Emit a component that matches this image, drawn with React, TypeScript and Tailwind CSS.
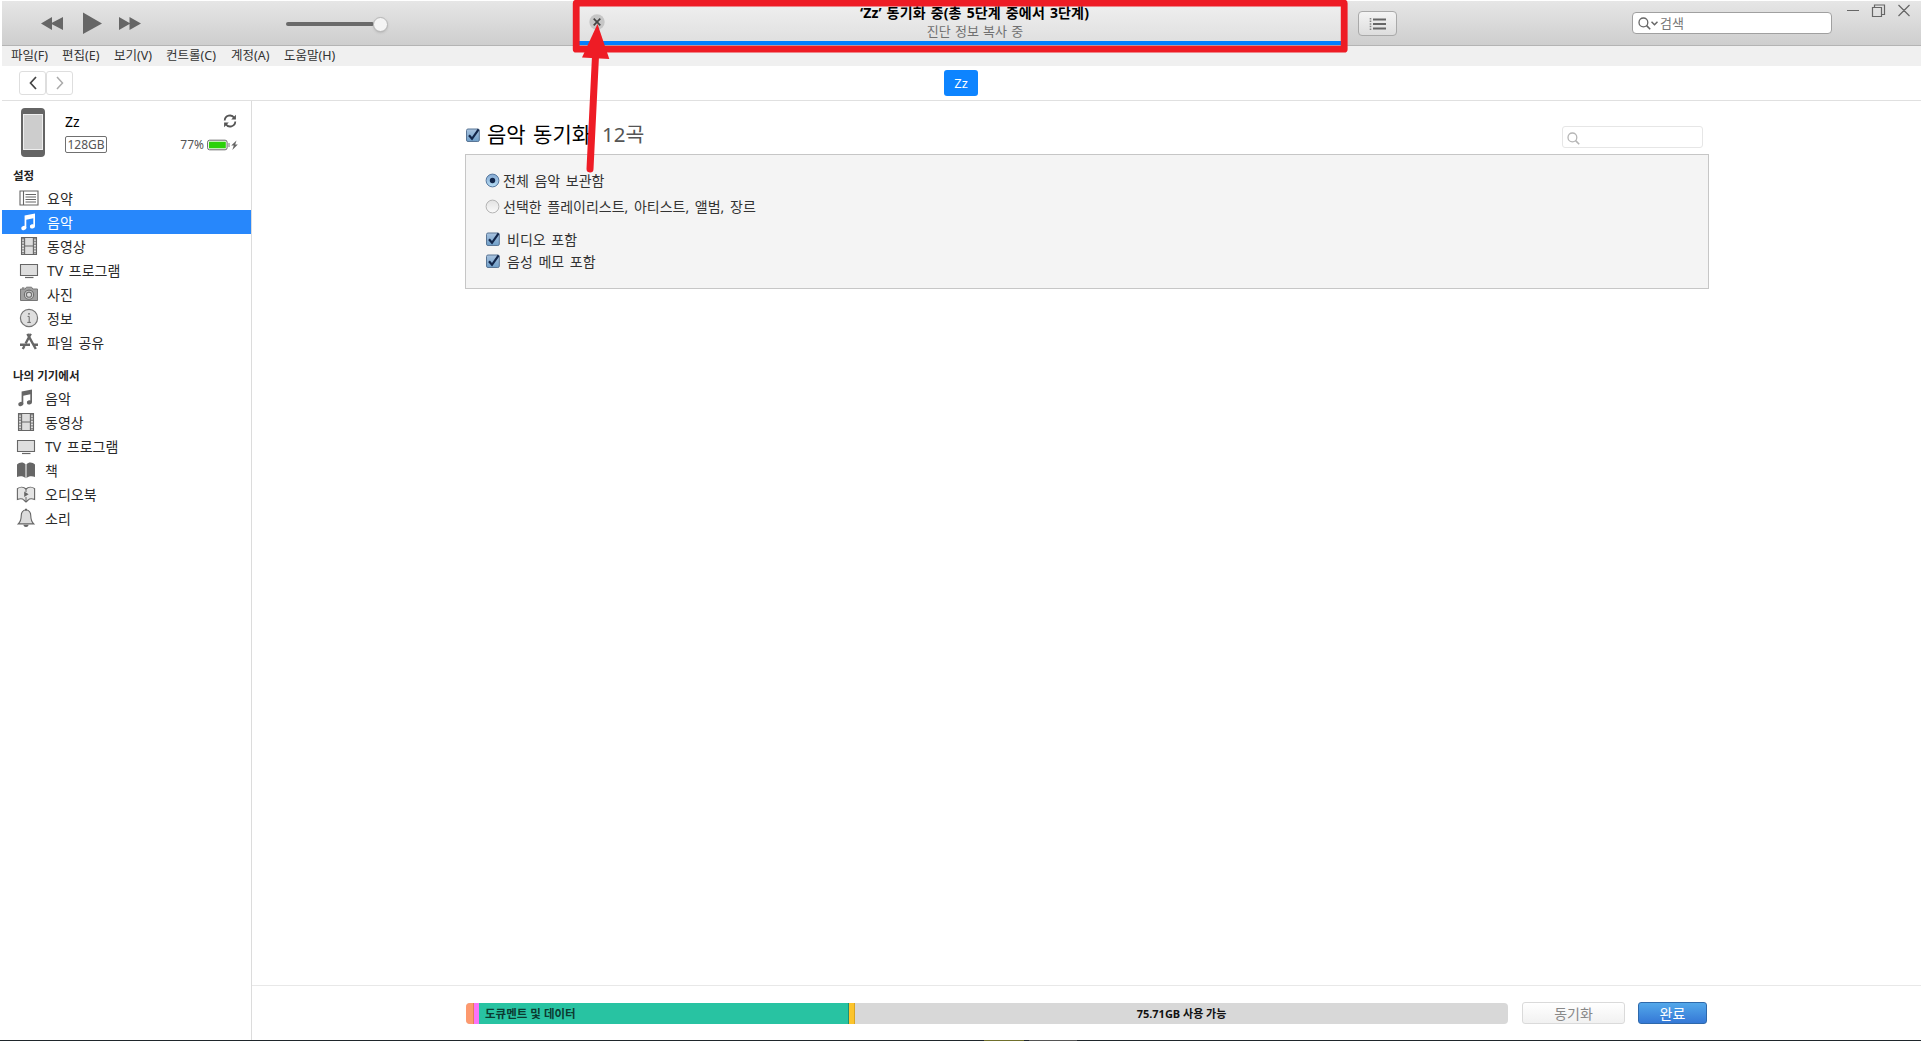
import React from "react";

type IconName = "summary" | "music" | "film" | "tv" | "camera" | "info" | "apps" | "book" | "audiobook" | "bell";

function Icon({ name, light }: { name: IconName; light?: boolean }) {
  const c = light ? "#ffffff" : "#666666";
  const common = { width: 20, height: 20, viewBox: "0 0 20 20", fill: "none", stroke: c, strokeWidth: 1.1 };
  switch (name) {
    case "summary":
      return (
        <svg {...common}>
          <path d="M1 3h18v14H1zM4.500 3v14" />
          <path d="M6.500 6.500H17M6.500 9H17M6.500 11.500H17M6.500 14H17" strokeWidth="1.100" />
        </svg>
      );
    case "music":
      return (
        <svg {...common} stroke="none" fill={c}>
          <path d="M5.600 3.600 16 1.600v12.800h-1.700V6.200L7.300 7.700v8.600H5.600z" />
          <ellipse cx="4.800" cy="16" rx="2.600" ry="2.100" transform="rotate(-15 4.800 16)" />
          <ellipse cx="13.400" cy="14.400" rx="2.600" ry="2.100" transform="rotate(-15 13.400 14.400)" />
        </svg>
      );
    case "film":
      return (
        <svg {...common}>
          <path d="M2.500 1.500h15v17h-15z" fill="#dedede" />
          <path d="M5.600 1.500v17M14.400 1.500v17M5.600 10h8.800" />
          <path d="M4 2v16M16 2v16" strokeWidth="1.400" strokeDasharray="1.400 1.400" />
        </svg>
      );
    case "tv":
      return (
        <svg {...common}>
          <path d="M1.500 4.500h17v11h-17z" fill="#dedede" />
          <path d="M6 17.500h8.500" strokeWidth="1.200" />
        </svg>
      );
    case "camera":
      return (
        <svg {...common}>
          <path d="M1.500 5h4.700l1.200-1.800h5.200L13.800 5h4.700v11.500h-17z" fill="#a2a2a2" stroke="#777" strokeWidth="1" />
          <circle cx="10" cy="10.700" r="4.600" fill="#d4d4d4" stroke="#707070" />
          <circle cx="10" cy="10.700" r="2.600" fill="#dcdcdc" stroke="#707070" />
          <path d="M3 4h2.400" />
        </svg>
      );
    case "info":
      return (
        <svg {...common}>
          <circle cx="10" cy="10" r="8.600" fill="#dfdfdf" stroke="#757575" strokeWidth="1.200" />
          <path d="M8.600 8.400h1.600v6M8.300 14.400h3.600" strokeWidth="1" />
          <circle cx="10" cy="5.800" r=".9" fill={c} stroke="none" />
        </svg>
      );
    case "apps":
      return (
        <svg {...common} strokeWidth="2.400">
          <path d="M8.400 1.800 16.800 17M11.800 1.800 6.600 11.500M5.400 14 3.800 17" />
          <path d="M1 12.700h10M14.400 12.700H19" />
        </svg>
      );
    case "book":
      return (
        <svg {...common} fill={c} stroke="none">
          <path d="M1 4.600C3 2.400 7 1.600 9.500 4.200v14C7.600 15.900 3.600 15.800 1 17zM10.500 4.200C13 1.600 17 2.400 19 4.600V17c-2.600-1.200-6.600-1.100-8.500 1.200z" />
        </svg>
      );
    case "audiobook":
      return (
        <svg {...common}>
          <path d="M1.400 4.600C4 2.600 7.600 2.800 10 5c2.400-2.200 6-2.400 8.600-.4v10.800c-2.600-.8-5.200-.8-6.400.6L10 18l-2.200-2c-1.200-1.400-3.800-1.400-6.400-.6z" fill="#e4e4e4" />
          <path d="M10 5v3M10 13v5" strokeWidth="1" />
          <path d="M8.200 7.600l4.400 2.700-4.400 2.700z" fill={c} stroke="none" />
        </svg>
      );
    case "bell":
      return (
        <svg {...common}>
          <path d="M10 1.800c-3.600.6-4.800 3-4.800 6.200 0 4-.8 5.800-3 7.900h15.600c-2.200-2.100-3-3.900-3-7.900 0-3.200-1.200-5.600-4.800-6.200z" fill="#dcdcdc" />
          <path d="M8 17.200c.4 1.600 3.600 1.600 4 0z" fill={c} />
          <path d="M9 1.600h2" strokeWidth="1.600" />
        </svg>
      );
  }
}

function Row({ icon, label, active, indent }: { icon: IconName; label: string; active?: boolean; indent?: boolean }) {
  return (
    <div
      className={
        "flex h-6 items-center text-[14px] " +
        (indent ? "gap-2 pl-[17px] " : "gap-[9px] pl-[14px] ") +
        (active ? "bg-[#2787fb] text-white" : "text-[#2a2a2a]")
      }
    >
      <Icon name={icon} light={active} />
      <span className="whitespace-pre [word-spacing:2px]">{label}</span>
    </div>
  );
}

function Check() {
  return (
    <svg width="16" height="16" viewBox="0 0 16 16" className="shrink-0">
      <defs>
        <linearGradient id="ck" x1="0" y1="0" x2="0" y2="1">
          <stop offset="0" stopColor="#a9c3df" />
          <stop offset="1" stopColor="#6f9fc9" />
        </linearGradient>
      </defs>
      <rect x="1.500" y="2" width="12.800" height="12.500" rx="1.500" fill="url(#ck)" stroke="#5a7696" />
      <path d="M4 8.200 7 11.800 13.600 2.400" fill="none" stroke="#12264a" strokeWidth="2.200" />
    </svg>
  );
}

function Radio({ on }: { on?: boolean }) {
  return (
    <svg width="15" height="15" viewBox="0 0 15 15" className="shrink-0">
      <defs>
        <linearGradient id="rOn" x1="0" y1="0" x2="0" y2="1">
          <stop offset="0" stopColor="#85a9d2" />
          <stop offset="1" stopColor="#b5dcf3" />
        </linearGradient>
        <linearGradient id="rOff" x1="0" y1="0" x2="0" y2="1">
          <stop offset="0" stopColor="#e2e2e2" />
          <stop offset="1" stopColor="#fafafa" />
        </linearGradient>
      </defs>
      <circle cx="7.500" cy="7.500" r="6.400" fill={on ? "url(#rOn)" : "url(#rOff)"} stroke={on ? "#55779f" : "#b4b4b4"} />
      {on && <circle cx="7.500" cy="7.500" r="2.700" fill="#12264a" />}
    </svg>
  );
}

function Magnifier({ color }: { color: string }) {
  return (
    <svg width="13" height="13" viewBox="0 0 13 13" fill="none" stroke={color} strokeWidth="1.300" className="shrink-0">
      <circle cx="5.400" cy="5.400" r="4.400" />
      <path d="m8.600 8.600 3.600 3.600" strokeWidth="1.600" />
    </svg>
  );
}

function Toolbar() {
  return (
    <header className="flex h-[46px] shrink-0 items-start border-t border-b border-t-white border-b-[#b4b4b4] bg-linear-to-b from-[#e6e6e6] to-[#cecece]">
      <div className="flex h-[44px] w-[571px] shrink-0 items-start pl-[38px]">
        <svg width="102" height="44" viewBox="0 1 102 44" fill="#666">
          <path d="M1 23.500 12 17v5.800L23 17v13l-11-5.800V30zM43 12.500 62 23.500 43 34zM79 17l10.500 6V17l11.500 6.500L89.500 30v-6L79 30z" />
        </svg>
        <div className="mt-[15px] ml-[144px] flex h-4 w-[104px] items-center">
          <div className="h-[4px] w-[88px] rounded-full bg-[#6a6a6a]" />
          <div className="-ml-px size-[15px] rounded-full border border-[#b5b5b5] bg-[#f4f4f4] shadow-sm" />
        </div>
      </div>

      <div className="relative flex h-[44px] w-[774px] shrink-0 flex-col items-center border-b-[4px] border-[#0080ff] bg-linear-to-b from-[#f0f0f0] to-[#e0e0e0]">
        <div className="mt-[2px] h-5 pl-[29px] text-[14px] leading-5 font-bold tracking-[0.15px] whitespace-pre text-black [word-spacing:1.200px]">
          ‘Zz’ 동기화 중(총 5단계 중에서 3단계)
        </div>
        <div className="h-4 pl-[30px] text-[13px] leading-4 whitespace-pre text-[#707070] [word-spacing:0.800px]">진단 정보 복사 중</div>
        <svg width="16" height="16" viewBox="0 0 16 16" className="absolute top-[13px] left-[16px]">
          <circle cx="8" cy="8" r="7.700" fill="#c6c6c6" />
          <path d="m4.700 4.700 6.600 6.600M11.300 4.700l-6.600 6.600" stroke="#444" strokeWidth="1.700" />
        </svg>
      </div>

      <div className="mt-[10px] ml-[11px] flex h-[25px] w-[39px] items-center justify-center rounded border border-[#a9a9a9] bg-linear-to-b from-[#f4f4f4] to-[#dddddd]">
        <svg width="20" height="14" viewBox="0 0 20 14" stroke="#666">
          <path d="M5 2.500h13M5 7h13M5 11.500h13" strokeWidth="2" />
          <path d="M2.500 1v12" strokeWidth="1.600" strokeDasharray="1.500 1.100" stroke="#888" />
        </svg>
      </div>

      <div className="mt-[11px] ml-[235px] flex h-[22px] w-[200px] items-center rounded border border-[#a0a0a0] bg-white pl-[5px] text-[13px] text-[#777]">
        <Magnifier color="#666" />
        <svg width="7" height="5" viewBox="0 0 7 5" fill="none" stroke="#666" strokeWidth="1.500">
          <path d="m.5.8 3 3 3-3" />
        </svg>
        <span className="ml-[2px] pt-px">검색</span>
      </div>

      <div className="flex items-start pt-[3px] pl-[15px]">
        <svg width="66" height="13" viewBox="0 0 66 13" fill="none" stroke="#666" strokeWidth="1.200">
          <path d="M0 6.500h12M25.500 3.500h9v9h-9zM27.500 3.500v-2.500h10v9.500h-3M51.500 1l11 11M62.500 1l-11 11" />
        </svg>
      </div>
    </header>
  );
}

function Sidebar() {
  return (
    <aside className="flex w-[250px] shrink-0 flex-col border-r border-[#dcdcdc]">
      <div className="flex h-[65px] items-start pt-[7px]">
        <svg width="24" height="49" viewBox="0 0 24 49" className="ml-[19px]">
          <rect width="24" height="49" rx="4" fill="#646464" />
          <rect x="2.500" y="6.500" width="19" height="35" fill="#cdcdcd" stroke="#eeeeee" />
        </svg>
        <div className="ml-[20px] flex flex-col items-start">
          <span className="mt-[4px] h-5 text-[14px] leading-5 text-black">Zz</span>
          <span className="mt-[4px] flex h-[17px] w-[42px] items-center justify-center rounded-[2px] border border-[#707070] text-[12px] text-[#555]">128GB</span>
        </div>
        <div className="ml-auto flex flex-col items-end pr-[11px]">
          <svg width="14" height="14" viewBox="0 0 14 14" fill="none" stroke="#555" strokeWidth="1.800" className="mt-[6px] mr-[3px]">
            <path d="M1.700 6.500A5.200 5.200 0 0 1 11.300 4M12.300 7.500A5.200 5.200 0 0 1 2.700 10" />
            <path d="M12.900.8v4.700H8.200zM1.100 13.200V8.500h4.700z" fill="#555" stroke="none" />
          </svg>
          <div className="mt-[7px] flex h-5 items-center text-[12px] text-[#555]">
            77%
            <svg width="32" height="12" viewBox="0 0 32 12" className="mr-px ml-[3px]">
              <rect x=".6" y="1.200" width="19.500" height="9.600" rx="2" fill="#fff" stroke="#666" />
              <rect x="2" y="2.700" width="16.800" height="6.600" fill="#2bd10a" />
              <path d="M22 4v4" stroke="#777" />
              <path d="m29.500 1.500-5.300 5h2.600l-1.500 4.500 5.500-5.500h-2.600z" fill="#666" />
            </svg>
          </div>
        </div>
      </div>
      <div className="flex h-[19px] items-center pl-[11px] text-[11.500px] font-bold text-[#222]">설정</div>
      <div className="mt-px flex flex-col">
        <Row icon="summary" label="요약" indent />
        <Row icon="music" label="음악" indent active />
        <Row icon="film" label="동영상" indent />
        <Row icon="tv" label="TV 프로그램" indent />
        <Row icon="camera" label="사진" indent />
        <Row icon="info" label="정보" indent />
        <Row icon="apps" label="파일 공유" indent />
      </div>
      <div className="mt-[12px] flex h-[20px] items-center pl-[11px] text-[11.500px] font-bold whitespace-pre text-[#222]">나의 기기에서</div>
      <div className="flex flex-col">
        <Row icon="music" label="음악" />
        <Row icon="film" label="동영상" />
        <Row icon="tv" label="TV 프로그램" />
        <Row icon="book" label="책" />
        <Row icon="audiobook" label="오디오북" />
        <Row icon="bell" label="소리" />
      </div>
    </aside>
  );
}

function Content() {
  return (
    <main className="flex flex-1 flex-col">
      <div className="flex flex-1 flex-col pl-[213px]">
        <div className="flex h-[53px] w-[1243px] items-start">
          <div className="flex h-[34px] items-center pt-[33px] whitespace-pre">
            <Check />
            <span className="ml-[6px] text-[21px] text-black [word-spacing:2px]">음악 동기화</span>
            <span className="ml-[11px] text-[20.500px] text-[#555]">12곡</span>
          </div>
          <div className="mt-[25px] mr-[5px] ml-auto flex h-[22px] w-[141px] items-center rounded-[3px] border border-[#e6e6e6] pt-[2px] pl-[4px]">
            <Magnifier color="#b5b5b5" />
          </div>
        </div>
        <section className="flex h-[135px] w-[1244px] flex-col border-[1.500px] border-[#c6c6c6] bg-[#f4f4f4] pl-[19px] text-[14px] whitespace-pre text-[#333] [word-spacing:2px]">
          <label className="mt-[13px] flex h-[25px] items-center gap-[3px]">
            <Radio on />
            전체 음악 보관함
          </label>
          <label className="flex h-[26px] items-center gap-[3px]">
            <Radio />
            선택한 플레이리스트, 아티스트, 앨범, 장르
          </label>
          <label className="mt-[9px] flex h-[22px] items-center gap-[6px]">
            <Check />
            비디오 포함
          </label>
          <label className="flex h-[22px] items-center gap-[6px]">
            <Check />
            음성 메모 포함
          </label>
        </section>
      </div>
      <footer className="flex h-[55px] shrink-0 items-start border-t border-[#e8e8e8] pt-[17px] pl-[214px] whitespace-pre">
        <div className="flex h-[21px] w-[1042px] overflow-hidden rounded-[4px] bg-[#d8d8d8] text-[11.500px] font-bold text-[#111]">
          <div className="w-[8px] border-r border-[#e07f55] bg-[#fd996e]" />
          <div className="w-[5px] bg-[#fb72f8]" />
          <div className="flex w-[370px] items-center border-r border-[#1c8f74] bg-[#28c3a2] pt-px pl-[6px] text-[#0c3a30]">도큐멘트 및 데이터</div>
          <div className="w-[6px] border-r border-[#d9a521] bg-[#fcc42c]" />
          <div className="flex flex-1 items-center justify-center pt-px text-[11px]">75.71GB 사용 가능</div>
        </div>
        <button className="-mt-px ml-[14px] h-[22px] w-[103px] rounded-[3px] border border-[#dadada] bg-linear-to-b from-white to-[#f1f1f1] text-[14px] leading-[19px] text-[#888]">동기화</button>
        <button className="-mt-px ml-[13px] h-[22px] w-[69px] rounded-[3px] border border-[#2e69ab] bg-linear-to-b from-[#54a8ea] to-[#3578d6] text-[14px] leading-[19px] text-white">완료</button>
      </footer>
    </main>
  );
}

/* Red box and arrow calling out the stop button */
function Callout() {
  return (
    <svg width="800" height="180" viewBox="0 0 800 180" className="pointer-events-none absolute top-0 left-[560px]">
      <rect x="16.200" y="3.200" width="768" height="46" fill="none" stroke="#ee1c25" strokeWidth="6.800" strokeLinejoin="round" />
      <path d="M30 169 35.500 56" stroke="#ee1c25" strokeWidth="7" strokeLinecap="round" />
      <path d="M37.500 24 49.300 59 22 57.500z" fill="#ee1c25" />
    </svg>
  );
}

export default function App() {
  return (
    <div className="relative flex h-[1041px] w-[1921px] flex-col overflow-hidden bg-white font-['Noto_Sans','Noto_Sans_CJK_KR',sans-serif]">
      <div className="flex flex-1 flex-col pl-[2px]">
        <Toolbar />
        <nav className="flex h-[20px] shrink-0 items-center bg-[#f0f0f0] pt-px pl-[9px] text-[12.500px] text-[#333]">
          <span className="w-[51px]">파일(F)</span>
          <span className="w-[52px]">편집(E)</span>
          <span className="w-[52px]">보기(V)</span>
          <span className="w-[65px]">컨트롤(C)</span>
          <span className="w-[53px]">계정(A)</span>
          <span>도움말(H)</span>
        </nav>
        <div className="flex h-[35px] shrink-0 items-start border-b border-[#e0e0e0] pt-[4px] pl-[17px]">
          <div className="flex h-[25px] w-[54px] pt-px">
            <div className="flex h-[24px] w-[27px] items-center justify-center rounded-[3px] border border-[#dedede]">
              <svg width="8" height="14" viewBox="0 0 8 14" fill="none" stroke="#444" strokeWidth="1.700"><path d="M7 1 1.500 7 7 13" /></svg>
            </div>
            <div className="flex h-[24px] w-[27px] items-center justify-center rounded-[3px] border border-[#dedede]">
              <svg width="8" height="14" viewBox="0 0 8 14" fill="none" stroke="#aaa" strokeWidth="1.500"><path d="m1 1 5.500 6L1 13" /></svg>
            </div>
          </div>
          <div className="ml-[871px] flex h-[26px] w-[34px] items-center justify-center rounded-[3px] bg-[#0d84ff] pt-px text-[13px] text-white">Zz</div>
        </div>
        <div className="flex flex-1">
          <Sidebar />
          <Content />
        </div>
      </div>
      <div className="flex h-px shrink-0 bg-[#1f262b]">
        <div className="ml-[984px] w-[40px] bg-[#70702c]" />
        <div className="ml-[5px] w-[48px] bg-[#555555]" />
      </div>
      <Callout />
    </div>
  );
}
